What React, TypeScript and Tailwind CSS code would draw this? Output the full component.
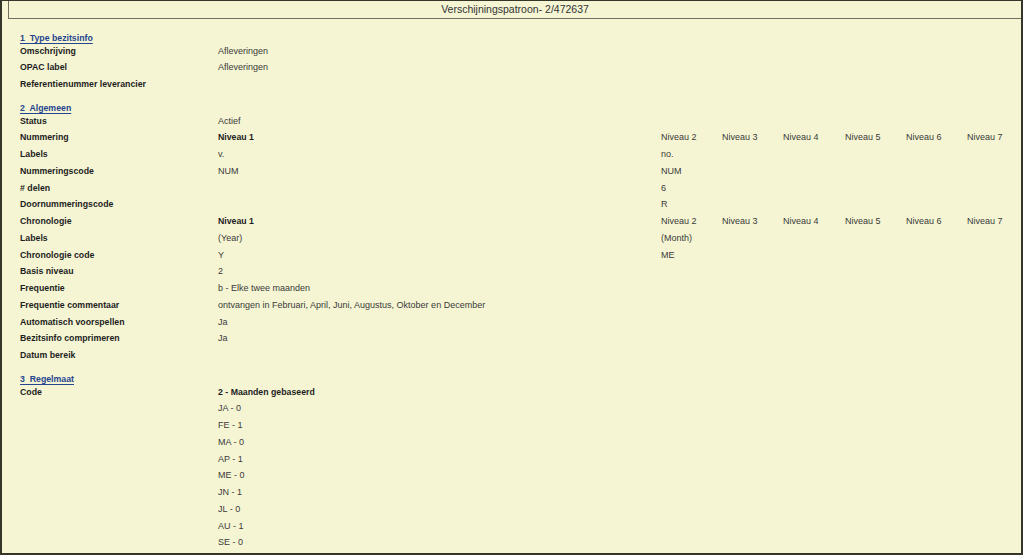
type Row = { label: string; value?: string; bold?: boolean; extra?: string[] };

const niveaus = ["Niveau 2", "Niveau 3", "Niveau 4", "Niveau 5", "Niveau 6", "Niveau 7"];

const sections: { title: string; rows: Row[] }[] = [
  {
    title: "1  Type bezitsinfo",
    rows: [
      { label: "Omschrijving", value: "Afleveringen" },
      { label: "OPAC label", value: "Afleveringen" },
      { label: "Referentienummer leverancier" },
    ],
  },
  {
    title: "2  Algemeen",
    rows: [
      { label: "Status", value: "Actief" },
      { label: "Nummering", value: "Niveau 1", bold: true, extra: niveaus },
      { label: "Labels", value: "v.", extra: ["no."] },
      { label: "Nummeringscode", value: "NUM", extra: ["NUM"] },
      { label: "# delen", extra: ["6"] },
      { label: "Doornummeringscode", extra: ["R"] },
      { label: "Chronologie", value: "Niveau 1", bold: true, extra: niveaus },
      { label: "Labels", value: "(Year)", extra: ["(Month)"] },
      { label: "Chronologie code", value: "Y", extra: ["ME"] },
      { label: "Basis niveau", value: "2" },
      { label: "Frequentie", value: "b - Elke twee maanden" },
      { label: "Frequentie commentaar", value: "ontvangen in Februari, April, Juni, Augustus, Oktober en December" },
      { label: "Automatisch voorspellen", value: "Ja" },
      { label: "Bezitsinfo comprimeren", value: "Ja" },
      { label: "Datum bereik" },
    ],
  },
  {
    title: "3  Regelmaat",
    rows: [
      { label: "Code", value: "2 - Maanden gebaseerd", bold: true },
      { label: "", value: "JA - 0" },
      { label: "", value: "FE - 1" },
      { label: "", value: "MA - 0" },
      { label: "", value: "AP - 1" },
      { label: "", value: "ME - 0" },
      { label: "", value: "JN - 1" },
      { label: "", value: "JL - 0" },
      { label: "", value: "AU - 1" },
      { label: "", value: "SE - 0" },
    ],
  },
];

export default function App() {
  return (
    <div
      className="w-[1023px] h-[555px] overflow-hidden bg-[#f5f5d3] border-t border-l-2 border-r-2 border-b-2 border-[#35352a] text-[8.75px] text-[#2a2a2a]"
      style={{ fontFamily: '"Liberation Sans", Arial, sans-serif' }}
    >
      {/* title bar */}
      <div className="ml-[6px] h-[18px] border-l border-b border-[#707060] flex items-center justify-center text-[10.5px] text-[#333]">
        Verschijningspatroon- 2/472637
      </div>

      <div className="pl-[18px] pt-[12.5px] flex flex-col gap-[6.75px]">
        {sections.map((s) => (
          <div key={s.title}>
            <div className="h-[13px] leading-[13px] font-bold text-[#26458f] underline underline-offset-[1.5px] whitespace-pre">
              {s.title}
            </div>
            {s.rows.map((r, i) => (
              <div
                key={i}
                className="grid grid-cols-[198px_443px_61px_61px_62px_61px_61px_62px] h-[16.75px] leading-[13px]"
              >
                <div className="font-bold text-[#1e1e1e] whitespace-nowrap">{r.label}</div>
                <div
                  className={
                    r.bold
                      ? "font-bold text-[#1e1e1e] whitespace-nowrap"
                      : "text-[9px] text-[#3a3a3a] whitespace-nowrap"
                  }
                >
                  {r.value}
                </div>
                {r.extra?.map((e) => (
                  <div key={e} className="text-[9px] text-[#3a3a3a] whitespace-nowrap">
                    {e}
                  </div>
                ))}
              </div>
            ))}
          </div>
        ))}
      </div>
    </div>
  );
}
